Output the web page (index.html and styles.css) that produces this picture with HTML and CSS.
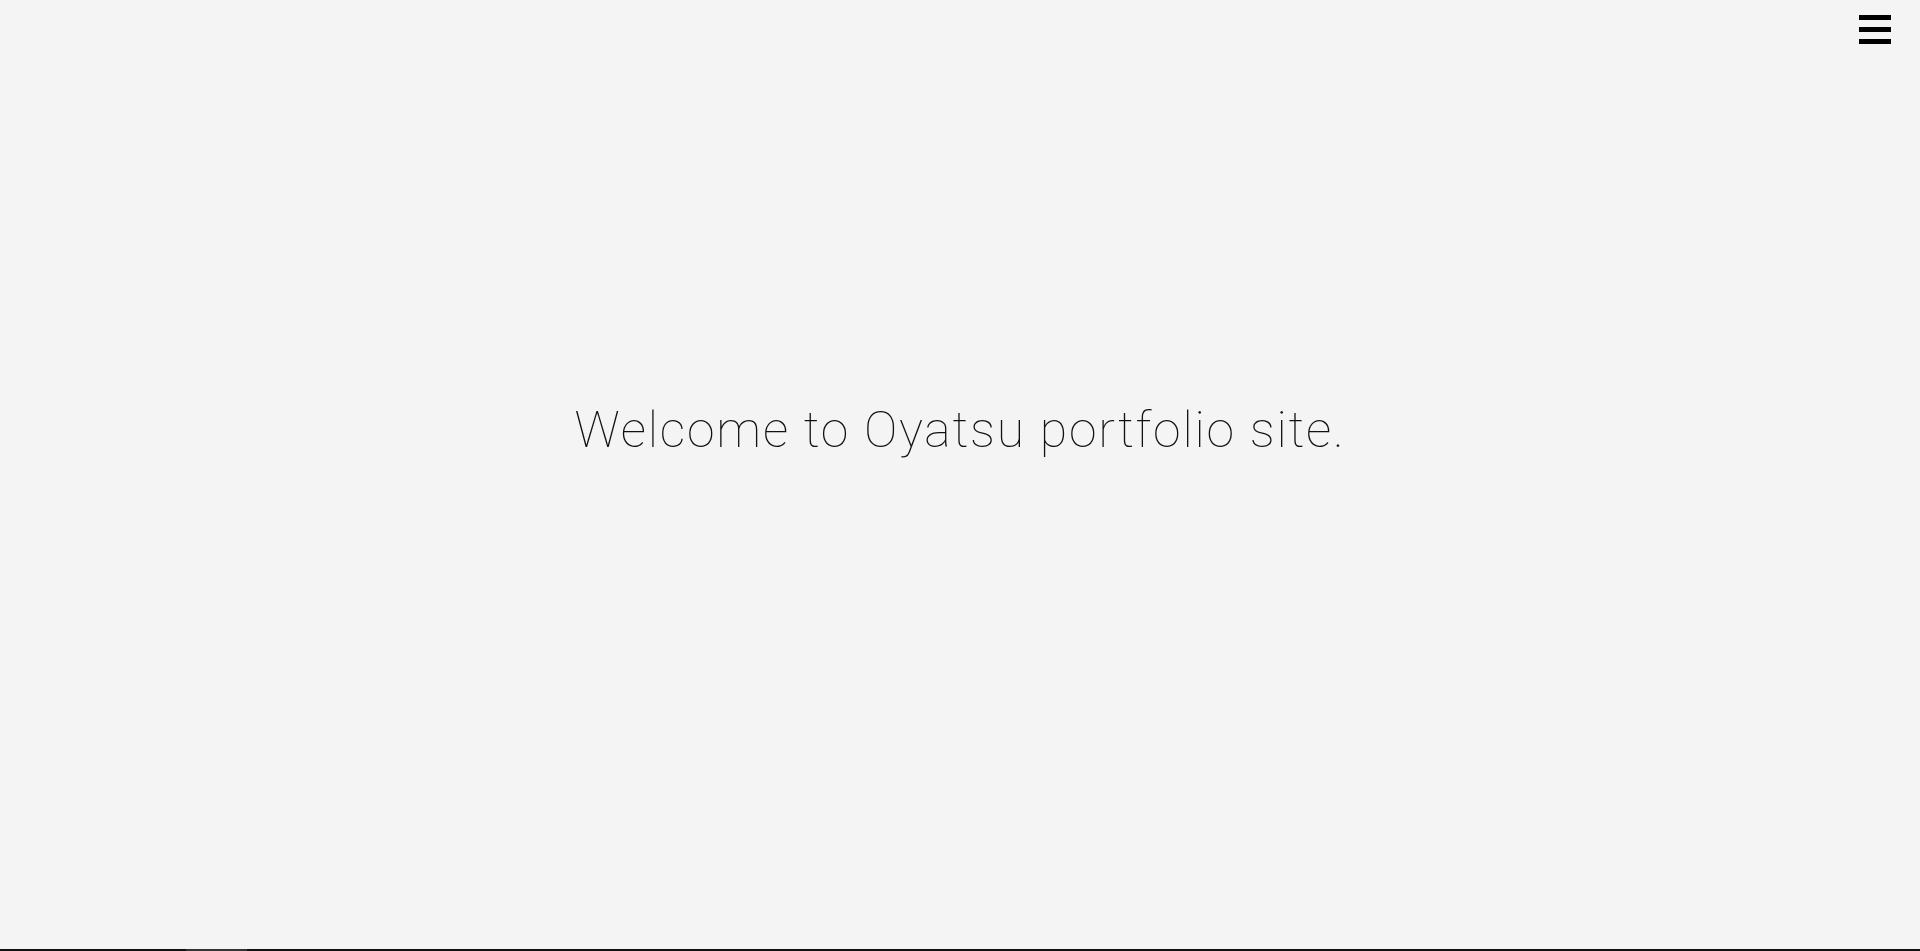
FILE: index.html
```html
<!DOCTYPE html>
<html lang="en">
<head>
<meta charset="utf-8">
<title>Oyatsu portfolio</title>
<link rel="stylesheet" href="styles.css">
</head>
<body>
<div class="page">
  <header class="topbar">
    <button class="menu-btn" aria-label="Menu">
      <span class="bar"></span>
      <span class="bar"></span>
      <span class="bar"></span>
    </button>
  </header>
  <main class="hero">
    <h1 class="welcome">Welcome to Oyatsu portfolio site.</h1>
  </main>
  <div class="bottom-bar"><span class="thumb"></span></div>
</div>
</body>
</html>
```

FILE: styles.css
```css
html, body {
  margin: 0;
  padding: 0;
  height: 100%;
}
body {
  background: #f4f4f4;
  color: #111;
  font-family: Roboto, "Liberation Sans", sans-serif;
  overflow: hidden;
}
.page {
  display: flex;
  flex-direction: column;
  height: 100vh;
}
.topbar {
  display: flex;
  justify-content: flex-end;
  padding: 15px 29px 0 0;
  height: 45px;
}
.menu-btn {
  display: flex;
  flex-direction: column;
  gap: 7px;
  width: 32px;
  padding: 0;
  border: 0;
  background: transparent;
  cursor: pointer;
}
.bar {
  display: block;
  height: 5px;
  width: 32px;
  background: #000;
}
.hero {
  flex: 1;
  display: flex;
  justify-content: center;
  padding-top: 345px;
}
.welcome {
  margin: 0;
  font-size: 50px;
  font-weight: 100;
  line-height: 1;
  letter-spacing: 1.8px;
  color: #111;
}
.bottom-bar {
  height: 2px;
  background: #111;
  display: flex;
  padding-left: 186px;
}
.thumb {
  width: 61px;
  height: 2px;
  background: #333;
}
```
